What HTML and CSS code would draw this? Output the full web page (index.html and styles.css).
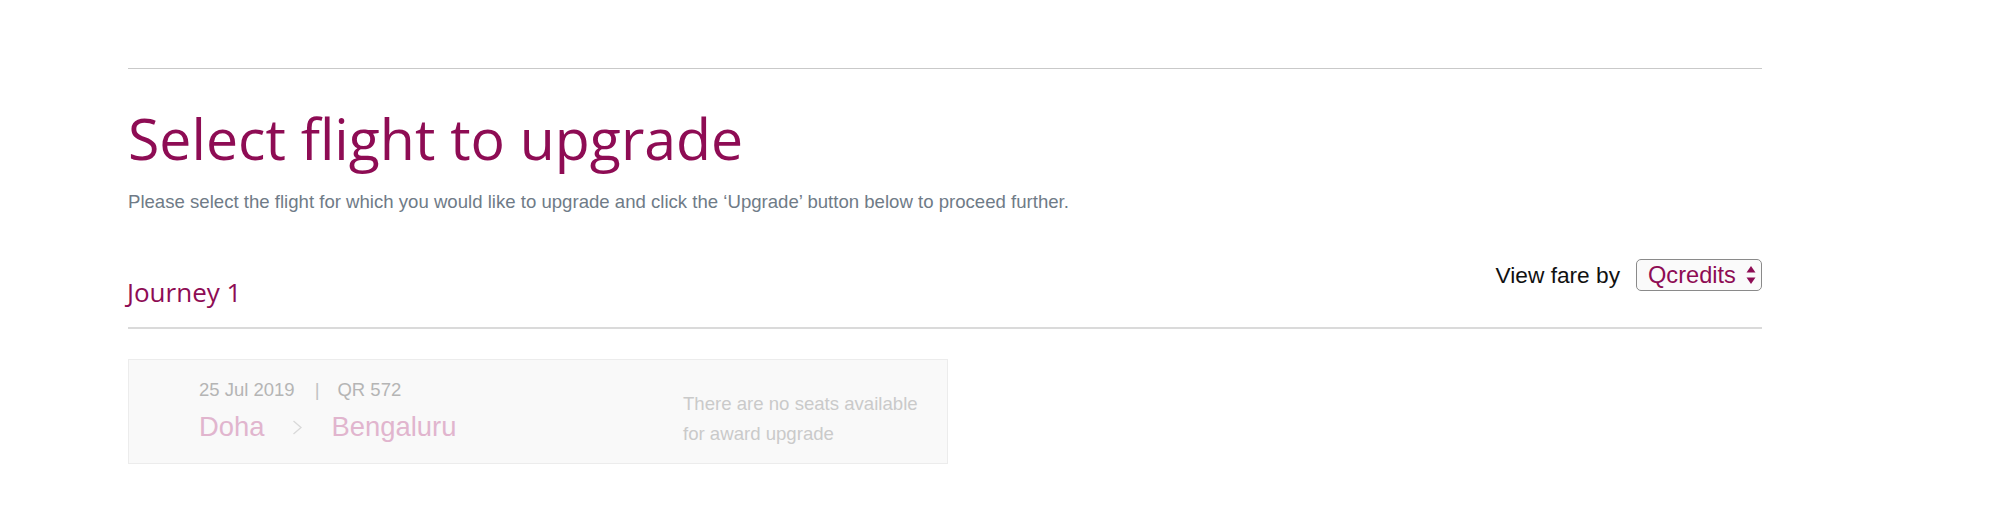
FILE: index.html
```html
<!DOCTYPE html>
<html lang="en">
<head>
<meta charset="utf-8">
<title>Select flight to upgrade</title>
<link rel="stylesheet" href="styles.css">
</head>
<body>
<div class="page">
  <hr class="top-rule">
  <h1 class="title">Select flight to upgrade</h1>
  <p class="intro">Please select the flight for which you would like to upgrade and click the ‘Upgrade’ button below to proceed further.</p>

  <div class="journey-head">
    <h2 class="journey-title">Journey 1</h2>
    <div class="fare-by">
      <span class="fare-label">View fare by</span>
      <div class="select">
        <span class="select-value">Qcredits</span>
        <svg class="select-arrows" width="10" height="20" viewBox="0 0 10 20" aria-hidden="true">
          <path d="M5 1 L9.5 7.5 L0.5 7.5 Z" fill="#8e0c54"/>
          <path d="M5 19 L9.5 12.5 L0.5 12.5 Z" fill="#8e0c54"/>
        </svg>
      </div>
    </div>
  </div>

  <div class="flight-card">
    <div class="flight-info">
      <div class="flight-meta">
        <span>25 Jul 2019</span><span class="sep">|</span><span>QR 572</span>
      </div>
      <div class="route">
        <span class="city">Doha</span>
        <svg class="chevron" width="11" height="15" viewBox="0 0 11 15" aria-hidden="true">
          <path d="M1.5 1 L9 7.5 L1.5 14" fill="none" stroke="#d9d9d9" stroke-width="1.3"/>
        </svg>
        <span class="city">Bengaluru</span>
      </div>
    </div>
    <div class="flight-status">There are no seats available for award upgrade</div>
  </div>
</div>
</body>
</html>
```

FILE: styles.css
```css
html, body {
  margin: 0;
  padding: 0;
  background: #ffffff;
}

.page {
  width: 1634px;
  margin-left: 128px;
  padding-top: 68px;
  font-family: "Liberation Sans", Arial, Helvetica, sans-serif;
}

.top-rule {
  margin: 0;
  border: 0;
  height: 1px;
  background: #c9c9c9;
}

.title {
  margin: 34px 0 0 0;
  font-family: "Open Sans", "Liberation Sans", sans-serif;
  font-weight: 400;
  font-size: 57.2px;
  line-height: 70px;
  color: #8e0c54;
}

.intro {
  margin: 17px 0 0 0;
  font-size: 18.6px;
  line-height: 24px;
  color: #6f7b87;
}

.journey-head {
  margin-top: 45px;
  display: flex;
  justify-content: space-between;
  align-items: flex-start;
  padding-bottom: 18px;
  border-bottom: 2px solid #dadada;
}

.journey-title {
  margin: 16px 0 0 -1px;
  font-family: "Open Sans", "Liberation Sans", sans-serif;
  font-weight: 400;
  font-size: 26px;
  line-height: 34px;
  color: #8e0c54;
}

.fare-by {
  display: flex;
  align-items: center;
  gap: 16px;
}

.fare-label {
  font-size: 22.7px;
  line-height: 32px;
  color: #111111;
}

.select {
  box-sizing: border-box;
  height: 32px;
  width: 126px;
  display: flex;
  align-items: center;
  justify-content: space-between;
  padding: 0 5px 0 11px;
  border: 1px solid #8a8a8a;
  border-radius: 5px;
  background: #fafafa;
}

.select-value {
  font-size: 23.6px;
  line-height: 30px;
  color: #8e0c54;
}

.select-arrows {
  display: block;
}

.flight-card {
  margin-top: 30px;
  box-sizing: border-box;
  width: 820px;
  height: 105px;
  display: flex;
  align-items: flex-start;
  padding: 18px 14px 0 70px;
  border: 1px solid #ececec;
  background: #f9f9f9;
}

.flight-info {
  flex: 1;
}

.flight-meta {
  font-size: 18.5px;
  line-height: 24px;
  color: #b5b5b5;
}

.sep {
  margin: 0 18px 0 20px;
  color: #c2c2c2;
}

.route {
  margin-top: 8px;
  display: flex;
  align-items: center;
  font-size: 27.4px;
  line-height: 34px;
  color: #e1b5ce;
}

.chevron {
  display: block;
  margin: 0 28px 0 28px;
}

.flight-status {
  width: 250px;
  margin-top: 11px;
  font-size: 18.6px;
  line-height: 30px;
  color: #cacaca;
}
```
